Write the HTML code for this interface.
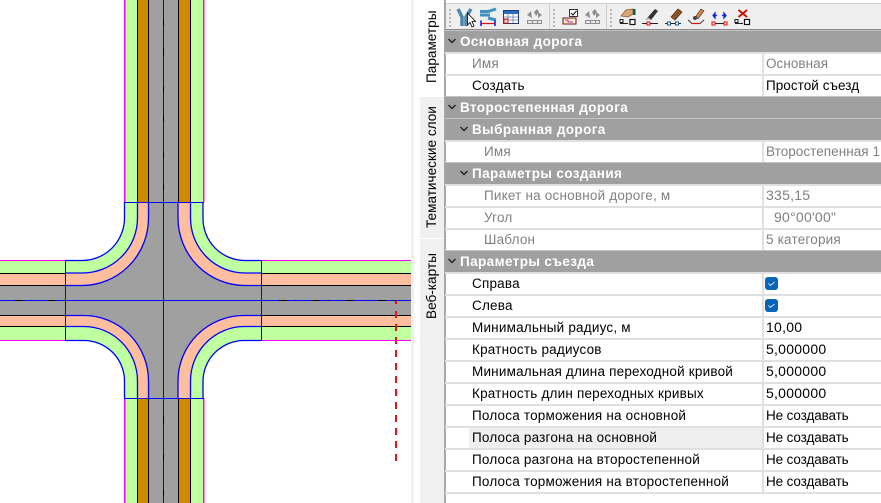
<!DOCTYPE html>
<html lang="ru"><head><meta charset="utf-8"><style>
html,body{margin:0;padding:0;background:#fff}
#p{position:relative;width:881px;height:503px;overflow:hidden;background:#fff;font-family:"Liberation Sans",sans-serif;font-size:13.5px;color:#000}
.a{position:absolute}
.h{position:absolute;left:445px;right:0;height:21px;background:#a0a0a0;color:#fff;font-weight:bold;line-height:21px;border-top:1px solid #c4c4c4;white-space:nowrap;letter-spacing:.4px}
.h span{position:absolute;top:0}
.h svg{position:absolute;top:6px}
.r{position:absolute;left:445px;right:0;height:20px;border-top:2px solid #e0e0e0;line-height:20px;white-space:nowrap}
.r i{font-style:normal;position:absolute;top:0;letter-spacing:.2px}
.r b{font-weight:normal;position:absolute;left:321px;top:0;letter-spacing:.05px}
.r b.n{font-size:14px;letter-spacing:.25px;top:-1px}
.r b.c{letter-spacing:-.12px}
.d{color:#808080}
.s{position:absolute;left:317px;top:0;width:2px;height:20px;background:#e0e0e0}
.tab{position:absolute;writing-mode:vertical-rl;transform:rotate(180deg);font-size:13.6px;white-space:nowrap;text-align:center;width:24px;line-height:24px}
.cb{position:absolute;left:320px;top:3px;width:13px;height:13px;background:#0a64b8;border-radius:3px}
.ch{position:absolute;left:0;top:0}
</style></head><body><div id="p">
<svg class="a" style="left:0;top:0" width="412" height="503" viewBox="0 0 412 503" shape-rendering="crispEdges">
<rect x="125" y="0" width="78" height="203" fill="#bfff9f"/>
<rect x="125" y="398" width="78" height="105" fill="#bfff9f"/>
<rect x="137" y="0" width="12" height="203" fill="#cf8a00"/>
<rect x="178" y="0" width="13" height="203" fill="#cf8a00"/>
<rect x="137" y="398" width="12" height="105" fill="#cf8a00"/>
<rect x="178" y="398" width="13" height="105" fill="#cf8a00"/>
<rect x="149" y="0" width="29" height="203" fill="#a0a0a0"/>
<rect x="149" y="398" width="29" height="105" fill="#a0a0a0"/>
<rect x="0" y="261" width="412" height="79" fill="#bfff9f"/>
<rect x="0" y="273" width="412" height="54" fill="#ffbf9f"/>
<rect x="0" y="286" width="412" height="30" fill="#a0a0a0"/>
<g shape-rendering="auto">
<path d="M124.5 202V218A42.5 42.5 0 0 1 82 260.5H65.5V340.5H84A40.5 40.5 0 0 1 124.5 381V398H203V381A41 41 0 0 1 244 340.5H261.5V260.5H245A42 42 0 0 1 203 218V202Z" fill="#bfff9f"/>
<path d="M137.5 202V218A55 55 0 0 1 82 273H65.5V326.5H84A53.5 54.5 0 0 1 137.5 381V398H190.5V381A54 54.5 0 0 1 244 326.5H261.5V273H245A54.5 55 0 0 1 190.5 218V202Z" fill="#ffbf9f"/>
<path d="M148.5 202V218A66.5 67.5 0 0 1 82 285.5H65.5V315.5H84A64.5 65.5 0 0 1 148.5 381V398H178V381A66 65.5 0 0 1 244 315.5H261.5V285.5H245A67 67.5 0 0 1 178 218V202Z" fill="#a0a0a0"/>
<g fill="none" stroke="#0000ff" stroke-width="1.3">
<path d="M124.5 202V218A42.5 42.5 0 0 1 82 260.5H65.5"/>
<path d="M137.5 202V218A55 55 0 0 1 82 273H65.5"/>
<path d="M148.5 202V218A66.5 67.5 0 0 1 82 285.5H65.5"/>
<path d="M203 202V218A42 42 0 0 0 245 260.5H261.5"/>
<path d="M190.5 202V218A54.5 55 0 0 0 245 273H261.5"/>
<path d="M178 202V218A67 67.5 0 0 0 245 285.5H261.5"/>
<path d="M124.5 398V381A40.5 40.5 0 0 0 84 340.5H65.5"/>
<path d="M137.5 398V381A53.5 54.5 0 0 0 84 326.5H65.5"/>
<path d="M148.5 398V381A64.5 65.5 0 0 0 84 315.5H65.5"/>
<path d="M203 398V381A41 41 0 0 1 244 340.5H261.5"/>
<path d="M190.5 398V381A54 54.5 0 0 1 244 326.5H261.5"/>
<path d="M178 398V381A66 65.5 0 0 1 244 315.5H261.5"/>
</g></g>
<g fill="#ff00ff">
<rect x="124" y="0" width="1.4" height="202"/><rect x="203" y="0" width="1.4" height="202"/>
<rect x="124" y="398" width="1.4" height="105"/><rect x="203" y="398" width="1.4" height="105"/>
<rect x="0" y="260" width="65" height="1"/><rect x="262" y="260" width="150" height="1"/>
<rect x="0" y="340" width="65" height="1"/><rect x="262" y="340" width="150" height="1"/>
</g>
<g fill="#000">
<rect x="137" y="0" width="1" height="202"/><rect x="148" y="0" width="1" height="202"/><rect x="178" y="0" width="1" height="202"/><rect x="190" y="0" width="1" height="202"/>
<rect x="137" y="398" width="1" height="105"/><rect x="148" y="398" width="1" height="105"/><rect x="178" y="398" width="1" height="105"/><rect x="190" y="398" width="1" height="105"/>
<rect x="0" y="273" width="65" height="1"/><rect x="0" y="285" width="65" height="1"/><rect x="0" y="315" width="65" height="1"/><rect x="0" y="326" width="65" height="1"/>
<rect x="262" y="273" width="150" height="1"/><rect x="262" y="285" width="150" height="1"/><rect x="262" y="315" width="150" height="1"/><rect x="262" y="326" width="150" height="1"/>
</g>
<g fill="#0000ff">
<rect x="124" y="202" width="80" height="1"/><rect x="124" y="398" width="80" height="1"/>
<rect x="65" y="260" width="1" height="81"/><rect x="261" y="260" width="1" height="81"/>
<rect x="0" y="300" width="412" height="1"/><rect x="163" y="0" width="1" height="503"/>
</g>
<path d="M163.500 20V26M163.500 48V56M163.500 86V92M163.500 116V122M163.500 152V158M163.500 184V190M163.500 416V424M163.500 454V460M163.500 490V496" stroke="#000" fill="none"/>
<path d="M15 300.500H32M48 300.500H65M279 300.500H296M312 300.500H329M345 300.500H362M378 300.500H395" stroke="#000" fill="none" stroke-dasharray="8 8"/>
<path d="M396 301V304M396 311V318M396 324V331M396 337V344M396 350V357M396 363V370M396 376V383M396 389V396M396 402V409M396 415V422M396 428V435M396 441V448M396 454V461" stroke="#ee1111" stroke-width="2" fill="none"/>
</svg>

<div class="a" style="left:411px;top:0;width:3px;height:503px;background:#efefef"></div>
<div class="a" style="left:420px;top:96px;width:24px;height:407px;background:#f0f0f0"></div>
<div class="a" style="left:420px;top:238px;width:24px;height:1px;background:#fff"></div>
<div class="a" style="left:417px;top:0;width:27px;height:97px;background:#fff"></div>
<div class="tab" style="left:420px;top:9px;height:75px">Параметры</div>
<div class="tab" style="left:420px;top:106px;height:122px">Тематические слои</div>
<div class="tab" style="left:420px;top:251px;height:70px">Веб-карты</div>
<div class="a" style="left:444px;top:0;width:2px;height:503px;background:#a8a8a8"></div>

<div class="a" style="left:446px;top:0;right:0;height:3px;background:#fff"></div>
<div class="a" style="left:446px;top:3px;right:0;height:1px;background:#d0d0d0"></div>
<div class="a" style="left:446px;top:4px;right:0;height:25px;background:#efefef"></div>
<div class="a" style="left:446px;top:29px;right:0;height:1px;background:#8a8a8a"></div>
<svg class="a" style="left:446px;top:0" width="435" height="30" viewBox="446 0 435 30">
<g fill="#b9b9b9">
<rect x="449" y="9" width="2" height="2"/><rect x="449" y="13" width="2" height="2"/><rect x="449" y="17" width="2" height="2"/><rect x="449" y="21" width="2" height="2"/><rect x="449" y="25" width="2" height="2"/>
<rect x="553" y="9" width="2" height="2"/><rect x="553" y="13" width="2" height="2"/><rect x="553" y="17" width="2" height="2"/><rect x="553" y="21" width="2" height="2"/><rect x="553" y="25" width="2" height="2"/>
<rect x="610" y="9" width="2" height="2"/><rect x="610" y="13" width="2" height="2"/><rect x="610" y="17" width="2" height="2"/><rect x="610" y="21" width="2" height="2"/><rect x="610" y="25" width="2" height="2"/>
</g>
<rect x="549" y="4" width="1" height="25" fill="#cfcfcf"/><rect x="606" y="4" width="1" height="25" fill="#cfcfcf"/>
<path d="M458 9L462 17V26M471 9L466 17V26" stroke="#4a86ad" stroke-width="3.500" fill="none"/>
<path d="M467.500 13V25L470 22.500L472 27L474 26L472 21.500L475.500 21.500Z" fill="#fff" stroke="#000" stroke-width=".8"/>
<path d="M480 11.500H488L496 9M480 15H490M488 18L496 20" stroke="#3f8fc0" stroke-width="3" fill="none"/>
<path d="M481 23.500H495" stroke="#e01010" stroke-width="1.200"/><path d="M481 20.500V26M495 20.500V26" stroke="#1010e0" stroke-width="1.500"/>
<rect x="503.500" y="10.500" width="15" height="13" fill="#fff" stroke="#223a7a"/>
<rect x="504" y="11" width="14" height="3" fill="#2a6ec0"/>
<path d="M504 17H518M504 20H518M508 14V23M513 14V23" stroke="#6a7fb0" stroke-width=".8"/>
<rect x="504" y="19" width="4" height="4" fill="none" stroke="#e01010"/>
<path d="M527 15L531 11L532 18ZM534 12L537 9L539 12L536 16ZM538 12L542 15L538 18Z" fill="#8f8f8f"/>
<rect x="527.500" y="20.500" width="14" height="3" fill="#e8e8e8" stroke="#8f8f8f"/>
<path d="M532.500 20V24M537.500 20V24" stroke="#8f8f8f"/>
<rect x="569.500" y="9.500" width="8" height="7" fill="#fff" stroke="#333"/>
<path d="M571 13L573 15L576.500 11" stroke="#222" stroke-width="1.200" fill="none"/>
<rect x="563" y="18" width="13" height="6" fill="#fff3c8" stroke="#6a1818"/>
<path d="M565 20H568V22H573" stroke="#d818b0" fill="none"/>
<path d="M585 15L589 11L590 18ZM592 12L595 9L597 12L594 16ZM596 12L600 15L596 18Z" fill="#8f8f8f"/>
<rect x="585.500" y="20.500" width="14" height="3" fill="#e8e8e8" stroke="#8f8f8f"/>
<path d="M590.500 20V24M595.500 20V24" stroke="#8f8f8f"/>
<path d="M621 16L626 10L633 9L633 14L628 17Z" fill="#d9a878" stroke="#8a5a30" stroke-width=".8"/>
<rect x="633" y="9" width="2.500" height="6" fill="#0d5a5a"/>
<rect x="620" y="19.500" width="3" height="3" fill="none" stroke="#222"/><path d="M620 23.500H628" stroke="#222"/><rect x="630" y="19.500" width="5" height="5" fill="#fff" stroke="#111" stroke-width="1.200"/>
<path d="M648 17L655 9L658 11L651 20Z" fill="#333"/>
<path d="M645 20L648 17L650 19Z" fill="#999"/>
<path d="M642 23.500H658" stroke="#222"/><rect x="647" y="22" width="3" height="3" fill="#fff" stroke="#e00"/>
<path d="M671 17L678 9L682 12L675 20Z" fill="#8a5528" stroke="#502c10" stroke-width=".7"/>
<path d="M665 23.500H681" stroke="#222"/><rect x="667.500" y="22" width="3" height="3" fill="#fff" stroke="#1a5a8a"/><rect x="675.500" y="22" width="3" height="3" fill="#fff" stroke="#1a5a8a"/>
<path d="M696 16L701 9L704 11L698 19Z" fill="#d88040" stroke="#333" stroke-width=".6"/><circle cx="695" cy="18" r="2" fill="#445"/>
<path d="M688 20L692 23.500H700L704 20" stroke="#333" fill="none"/><path d="M692 23.500H700" stroke="#e01010" stroke-width="1.200"/>
<path d="M713 15.500H717M713 15.500L715 13V18ZM726 15.500H722M726 15.500L724 13V18Z" stroke="#0b22e8" fill="#0b22e8" stroke-width="1.200"/>
<path d="M712 23.500H726" stroke="#222"/><rect x="712" y="22" width="3" height="3" fill="#fff" stroke="#e00"/><rect x="724" y="22" width="3" height="3" fill="#fff" stroke="#e00"/>
<path d="M738.500 10L747 17M747 10L738.500 17" stroke="#c81400" stroke-width="2" fill="none"/>
<rect x="735" y="19.500" width="3" height="3" fill="none" stroke="#222"/><path d="M735 23.500H743" stroke="#222"/><rect x="744.500" y="19.500" width="5" height="5" fill="#fff" stroke="#111" stroke-width="1.200"/>
</svg>

<div class="h" style="top:30px"><svg style="left:3px" width="8" height="8"><path d="M.5 2L4 5.500L7.500 2" stroke="#222" stroke-width="1.400" fill="none"/></svg><span style="left:15px">Основная дорога</span></div>
<div class="r" style="top:52px"><i class="d" style="left:27px">Имя</i><span class="s"></span><b class="d">Основная</b></div>
<div class="r" style="top:74px"><i style="left:27px">Создать</i><span class="s"></span><b>Простой съезд</b></div>
<div class="h" style="top:96px"><svg style="left:3px" width="8" height="8"><path d="M.5 2L4 5.500L7.500 2" stroke="#222" stroke-width="1.400" fill="none"/></svg><span style="left:15px">Второстепенная дорога</span></div>
<div class="h" style="top:118px"><svg style="left:15px" width="8" height="8"><path d="M.5 2L4 5.500L7.500 2" stroke="#222" stroke-width="1.400" fill="none"/></svg><span style="left:27px">Выбранная дорога</span></div>
<div class="r" style="top:140px"><i class="d" style="left:39px">Имя</i><span class="s"></span><b class="d">Второстепенная 1</b></div>
<div class="h" style="top:162px"><svg style="left:15px" width="8" height="8"><path d="M.5 2L4 5.500L7.500 2" stroke="#222" stroke-width="1.400" fill="none"/></svg><span style="left:27px">Параметры создания</span></div>
<div class="r" style="top:184px"><i class="d" style="left:39px">Пикет на основной дороге, м</i><span class="s"></span><b class="d n">335,15</b></div>
<div class="r" style="top:206px"><i class="d" style="left:39px">Угол</i><span class="s"></span><b class="d n" style="left:329px">90°00'00"</b></div>
<div class="r" style="top:228px"><i class="d" style="left:39px">Шаблон</i><span class="s"></span><b class="d" style="letter-spacing:.2px">5 категория</b></div>
<div class="h" style="top:250px"><svg style="left:3px" width="8" height="8"><path d="M.5 2L4 5.500L7.500 2" stroke="#222" stroke-width="1.400" fill="none"/></svg><span style="left:15px">Параметры съезда</span></div>
<div class="r" style="top:272px"><i style="left:27px">Справа</i><span class="s"></span><span class="cb"><svg class="ch" width="13" height="13"><path d="M3.500 6.500L5.500 8.500L9.500 5" stroke="#cfe4f8" fill="none"/></svg></span></div>
<div class="r" style="top:294px"><i style="left:27px">Слева</i><span class="s"></span><span class="cb"><svg class="ch" width="13" height="13"><path d="M3.500 6.500L5.500 8.500L9.500 5" stroke="#cfe4f8" fill="none"/></svg></span></div>
<div class="r" style="top:316px"><i style="left:27px">Минимальный радиус, м</i><span class="s"></span><b class="n">10,00</b></div>
<div class="r" style="top:338px"><i style="left:27px">Кратность радиусов</i><span class="s"></span><b class="n">5,000000</b></div>
<div class="r" style="top:360px"><i style="left:27px">Минимальная длина переходной кривой</i><span class="s"></span><b class="n">5,000000</b></div>
<div class="r" style="top:382px"><i style="left:27px">Кратность длин переходных кривых</i><span class="s"></span><b class="n">5,000000</b></div>
<div class="r" style="top:404px"><i style="left:27px">Полоса торможения на основной</i><span class="s"></span><b class="c">Не создавать</b></div>
<div class="r" style="top:426px"><span class="a" style="left:24px;top:0;width:293px;height:20px;background:#efefef"></span><i style="left:27px">Полоса разгона на основной</i><span class="s"></span><b class="c">Не создавать</b></div>
<div class="r" style="top:448px"><i style="left:27px">Полоса разгона на второстепенной</i><span class="s"></span><b class="c">Не создавать</b></div>
<div class="r" style="top:470px"><i style="left:27px">Полоса торможения на второстепенной</i><span class="s"></span><b class="c">Не создавать</b></div>
<div class="a" style="left:445px;right:0;top:492px;height:2px;background:#e0e0e0"></div>
</div></body></html>
